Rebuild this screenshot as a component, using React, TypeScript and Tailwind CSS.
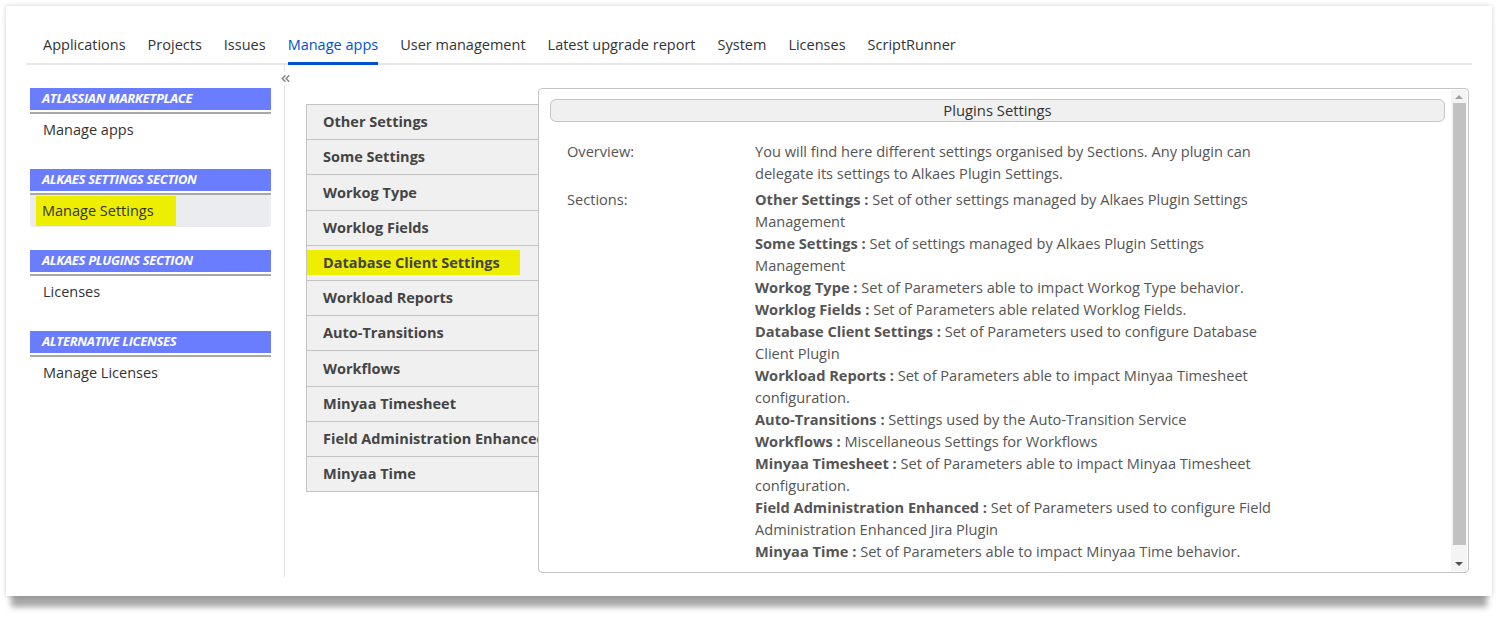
import { ChevronsLeft } from 'lucide-react'

const navItems = [
  'Applications',
  'Projects',
  'Issues',
  'Manage apps',
  'User management',
  'Latest upgrade report',
  'System',
  'Licenses',
  'ScriptRunner',
]

const sideSections = [
  { title: 'Atlassian Marketplace', item: 'Manage apps', active: false },
  { title: 'Alkaes Settings Section', item: 'Manage Settings', active: true },
  { title: 'Alkaes Plugins Section', item: 'Licenses', active: false },
  { title: 'Alternative Licenses', item: 'Manage Licenses', active: false },
]

const tabs = [
  'Other Settings',
  'Some Settings',
  'Workog Type',
  'Worklog Fields',
  'Database Client Settings',
  'Workload Reports',
  'Auto-Transitions',
  'Workflows',
  'Minyaa Timesheet',
  'Field Administration Enhanced',
  'Minyaa Time',
]

const sections = [
  ['Other Settings', 'Set of other settings managed by Alkaes Plugin Settings Management'],
  ['Some Settings', 'Set of settings managed by Alkaes Plugin Settings Management'],
  ['Workog Type', 'Set of Parameters able to impact Workog Type behavior.'],
  ['Worklog Fields', 'Set of Parameters able related Worklog Fields.'],
  ['Database Client Settings', 'Set of Parameters used to configure Database Client Plugin'],
  ['Workload Reports', 'Set of Parameters able to impact Minyaa Timesheet configuration.'],
  ['Auto-Transitions', 'Settings used by the Auto-Transition Service'],
  ['Workflows', 'Miscellaneous Settings for Workflows'],
  ['Minyaa Timesheet', 'Set of Parameters able to impact Minyaa Timesheet configuration.'],
  ['Field Administration Enhanced', 'Set of Parameters used to configure Field Administration Enhanced Jira Plugin'],
  ['Minyaa Time', 'Set of Parameters able to impact Minyaa Time behavior.'],
]

const Sidebar = () => (
  <div className="w-[241px] ml-[4px] pt-[23px] flex flex-col gap-[23px]">
    {sideSections.map(s => (
      <div key={s.title}>
        <div className="h-[22px] bg-[#6a7dff] pl-[12px] flex items-center text-white text-[13px] font-bold italic uppercase tracking-[-0.3px]">
          {s.title}
        </div>
        <div className="h-[2px] mt-[2px] bg-[#a8a8a8]" />
        {s.active ? (
          <div className="h-[32px] bg-[#ebecf0] rounded-b-[3px] pl-[6px] flex items-center">
            <span className="h-[30px] bg-[#eeee00] pl-[6px] pr-[22px] flex items-center text-[14.5px] text-[#333]">
              {s.item}
            </span>
          </div>
        ) : (
          <div className="h-[32px] pl-[13px] flex items-center text-[14.5px] text-[#333]">
            {s.item}
          </div>
        )}
      </div>
    ))}
  </div>
)

const TabList = () => (
  <div className="w-[232px] mt-[16px] overflow-hidden shrink-0 self-start">
    <div className="w-[260px] border-l border-t border-[#c4c4c4] bg-[#f0f0f0]">
      {tabs.map(t => (
        <div
          key={t}
          className="h-[35.2px] border-b border-[#c4c4c4] flex items-center whitespace-nowrap text-[14.5px] font-bold text-[#444]"
        >
          {t === 'Database Client Settings' ? (
            <span className="h-[25px] w-[213px] bg-[#eeee00] pl-[16px] flex items-center">{t}</span>
          ) : (
            <span className="pl-[16px]">{t}</span>
          )}
        </div>
      ))}
    </div>
  </div>
)

const Scrollbar = () => (
  <div className="w-[16px] my-[1px] mr-[1px] flex flex-col items-center bg-[#f4f4f4]">
    <div className="h-[13px] flex items-center justify-center">
      <div className="w-0 h-0 border-l-[4px] border-r-[4px] border-b-[4px] border-l-transparent border-r-transparent border-b-[#a3a3a3]" />
    </div>
    <div className="w-[13px] flex-1 bg-[#c1c1c1]" />
    <div className="h-[26px] flex items-end justify-center pb-[5px]">
      <div className="w-0 h-0 border-l-[4px] border-r-[4px] border-t-[4px] border-l-transparent border-r-transparent border-t-[#505050]" />
    </div>
  </div>
)

const Panel = () => (
  <div className="w-[931px] h-[485px] border border-[#c5c5c5] rounded-[4px] bg-white flex shrink-0">
    <div className="flex-1 pl-[11px] pr-[6px] pt-[10px] overflow-hidden">
      <div className="h-[23px] border border-[#c5c5c5] rounded-[6px] bg-[#f0f0f0] flex items-center justify-center text-[14.8px] text-[#333]">
        Plugins Settings
      </div>
      <div className="pl-[17px] pt-[18px] text-[14.6px] leading-[22px] text-[#555]">
        <div className="flex">
          <div className="w-[188px] shrink-0">Overview:</div>
          <p className="w-[525px]">
            You will find here different settings organised by Sections. Any plugin can delegate its
            settings to Alkaes Plugin Settings.
          </p>
        </div>
        <div className="flex mt-[4px]">
          <div className="w-[188px] shrink-0">Sections:</div>
          <div className="w-[525px]">
            {sections.map(([name, desc]) => (
              <p key={name}>
                <b>{name} :</b> {desc}
              </p>
            ))}
          </div>
        </div>
      </div>
    </div>
    <Scrollbar />
  </div>
)

export default function App() {
  return (
    <div className="min-h-[626px] bg-white pt-[6px] pl-[6px] font-['Open_Sans',sans-serif]">
      <div className="w-[1486px] h-[590px] bg-white px-[20px] pt-[24px] shadow-[0_16px_6px_-5px_rgba(0,0,0,0.35),0_0_5px_rgba(0,0,0,0.18)]">
        <div className="h-[35px] border-b-2 border-[#e6e7ea] flex pl-[17px] gap-[22px] text-[14.5px] text-[#333]">
          {navItems.map(n => (
            <div
              key={n}
              className={
                n === 'Manage apps'
                  ? 'h-[35px] border-b-[3px] border-[#0052cc] text-[#0052cc] pt-[4px] whitespace-nowrap'
                  : 'h-[35px] pt-[4px] whitespace-nowrap'
              }
            >
              {n}
            </div>
          ))}
        </div>
        <div className="flex h-[512px]">
          <Sidebar />
          <div className="relative ml-[13px] flex-1 border-l border-[#e1e1e1] pl-[21px] pt-[23px] flex">
            <ChevronsLeft className="absolute -left-[6px] top-[7px] w-[13px] h-[13px] text-[#888] bg-white" strokeWidth={3} />
            <TabList />
            <Panel />
          </div>
        </div>
      </div>
    </div>
  )
}
